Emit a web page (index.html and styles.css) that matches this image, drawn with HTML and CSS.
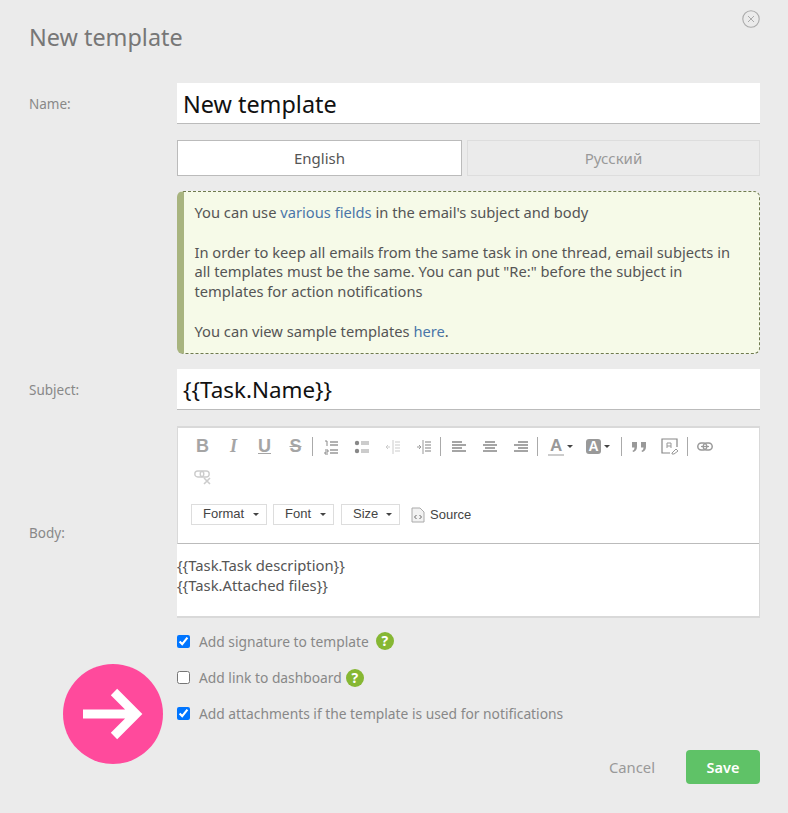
FILE: index.html
```html
<!DOCTYPE html>
<html lang="en">
<head>
<meta charset="utf-8">
<title>New template</title>
<link rel="stylesheet" href="styles.css">
</head>
<body>
<main class="dialog">
  <button class="close" aria-label="Close"><svg viewBox="0 0 18 18" width="18" height="18"><circle cx="9" cy="9" r="8.2" fill="none" stroke="#aaa" stroke-width="1.1"/><path d="M6 6l6 6M12 6l-6 6" stroke="#aaa" stroke-width="1" fill="none"/></svg></button>
  <h1 class="title">New template</h1>

  <div class="row row-name">
    <label class="label">Name:</label>
    <div class="big-input">New template</div>
  </div>

  <div class="tabs">
    <div class="tab tab-active">English</div>
    <div class="tab">Русский</div>
  </div>

  <div class="notice">
    <p>You can use <a href="#">various fields</a> in the email's subject and body</p>
    <p>In order to keep all emails from the same task in one thread, email subjects in all templates must be the same. You can put "Re:" before the subject in templates for action notifications</p>
    <p>You can view sample templates <a href="#">here</a>.</p>
  </div>

  <div class="row row-subject">
    <label class="label">Subject:</label>
    <div class="big-input big-subject">{{Task.Name}}</div>
  </div>

  <div class="row row-body">
    <label class="label label-body">Body:</label>
    <div class="editor">
      <div class="toolbar">
        <div class="tools">
          <span class="tool glyph g-b">B</span>
          <span class="tool glyph g-i">I</span>
          <span class="tool glyph g-u">U</span>
          <span class="tool glyph g-s">S</span>
          <span class="sep"></span>
          <span class="tool"><svg viewBox="0 0 16 16" width="16" height="16"><path d="M2 2h2v5M2 11h3v2H2v2h3" fill="none" stroke="#888" stroke-width="1"/><path d="M7 3h8M7 6h8M7 11h8M7 14h8" stroke="#999" stroke-width="1.6"/></svg></span>
          <span class="tool"><svg viewBox="0 0 16 16" width="16" height="16"><circle cx="3" cy="4" r="2.2" fill="#888"/><circle cx="3" cy="12" r="2.2" fill="#888"/><path d="M7 3h8M7 5h8M7 11h8M7 13h8" stroke="#999" stroke-width="1.2"/></svg></span>
          <span class="tool"><svg viewBox="0 0 16 16" width="16" height="16"><path d="M8 1v14" stroke="#ccc" stroke-width="1"/><path d="M1 8h4M3 6l-2 2 2 2" stroke="#ccc" fill="none"/><path d="M10 3h5M10 6h5M10 9h5M10 12h5" stroke="#ddd" stroke-width="1.4"/></svg></span>
          <span class="tool"><svg viewBox="0 0 16 16" width="16" height="16"><path d="M7 1v14" stroke="#999" stroke-width="1"/><path d="M1 8h4M3 6l2 2-2 2" stroke="#999" fill="none"/><path d="M9 3h6M9 6h6M9 9h6M9 12h6" stroke="#aaa" stroke-width="1.4"/></svg></span>
          <span class="sep"></span>
          <span class="tool"><svg viewBox="0 0 16 14" width="16" height="14"><path d="M1 2h10M1 5h14M1 8h10M1 11h14" stroke="#888" stroke-width="1.7"/></svg></span>
          <span class="tool"><svg viewBox="0 0 16 14" width="16" height="14"><path d="M3 2h10M1 5h14M3 8h10M1 11h14" stroke="#888" stroke-width="1.7"/></svg></span>
          <span class="tool"><svg viewBox="0 0 16 14" width="16" height="14"><path d="M5 2h10M1 5h14M5 8h10M1 11h14" stroke="#888" stroke-width="1.7"/></svg></span>
          <span class="sep"></span>
          <span class="tool tool-wide"><span class="glyph-a">A</span><i class="caret"></i></span>
          <span class="tool tool-wide tool-wider"><span class="glyph-a2">A</span><i class="caret"></i></span>
          <span class="sep"></span>
          <span class="tool"><svg viewBox="0 0 16 12" width="16" height="12"><path d="M1 1h5v5c0 3-2 4.500-4 5l-.500-1.200C3 9 3.500 8 3.500 6.500H1zM10 1h5v5c0 3-2 4.500-4 5l-.500-1.200C12 9 12.500 8 12.500 6.500H10z" fill="#999"/></svg></span>
          <span class="tool"><svg viewBox="0 0 18 18" width="18" height="18"><path d="M9 15H1V1h15v8" fill="none" stroke="#888" stroke-width="1.200"/><path d="M6 10V5h4v5M6 8h4" fill="none" stroke="#999"/><path d="M11 15l4-4 2 2-4 3h-2z" fill="#fff" stroke="#999"/></svg></span>
          <span class="sep"></span>
          <span class="tool"><svg viewBox="0 0 16 10" width="16" height="10"><rect x=".8" y="1" width="9" height="7" rx="3.500" fill="none" stroke="#999" stroke-width="1.500"/><rect x="6.200" y="1" width="9" height="7" rx="3.500" fill="none" stroke="#999" stroke-width="1.500"/><path d="M4 4.500h8" stroke="#999" stroke-width="1.200"/></svg></span>
          <span class="tool"><svg viewBox="0 0 18 16" width="18" height="16"><rect x=".8" y="1" width="9" height="6" rx="3" fill="none" stroke="#ccc" stroke-width="1.400"/><rect x="6.200" y="1" width="9" height="6" rx="3" fill="none" stroke="#ccc" stroke-width="1.400"/><path d="M10 8l6 6M16 8l-6 6" stroke="#ccc" stroke-width="1.600"/></svg></span>
        </div>
        <div class="combos">
          <span class="combo c-format"><span class="combo-text">Format</span><i class="caret"></i></span>
          <span class="combo c-font"><span class="combo-text">Font</span><i class="caret"></i></span>
          <span class="combo c-size"><span class="combo-text">Size</span><i class="caret"></i></span>
          <span class="source"><svg viewBox="0 0 14 16" width="14" height="16"><path d="M1 1h8l4 4v10H1z" fill="#f2f2f2" stroke="#aaa"/><path d="M5.500 8l-2 2 2 2M8.500 8l2 2-2 2" fill="none" stroke="#666"/></svg>Source</span>
        </div>
      </div>
      <div class="body-text">
        <div>{{Task.Task description}}</div>
        <div>{{Task.Attached files}}</div>
      </div>
    </div>
  </div>

  <div class="options">
    <label class="option"><input type="checkbox" checked><span>Add signature to template</span><b class="help help-sig">?</b></label>
    <label class="option"><input type="checkbox"><span>Add link to dashboard</span><b class="help">?</b></label>
    <label class="option"><input type="checkbox" checked><span>Add attachments if the template is used for notifications</span></label>
  </div>

  <div class="actions">
    <button class="cancel">Cancel</button>
    <button class="save">Save</button>
  </div>

  <div class="badge"><svg viewBox="0 0 100 100" width="100" height="100"><path d="M20 50h52M51 28l22 22-22 22" fill="none" stroke="#fff" stroke-width="9"/></svg></div>
</main>
</body>
</html>
```
FILE: styles.css
```css
* { box-sizing: border-box; }
html, body { margin: 0; padding: 0; }
body {
  background: #ebebeb;
  font-family: "Noto Sans", sans-serif;
  color: #555;
  width: 788px;
  height: 813px;
  overflow: hidden;
}
.dialog { position: relative; padding: 23px 28px 0 29px; height: 813px; }
.close {
  position: absolute; top: 10px; right: 28px;
  width: 18px; height: 18px; padding: 0; border: 0; background: none; line-height: 0;
}
.title { margin: 0 0 31px; font-size: 23.4px; line-height: 29px; font-weight: 400; color: #777; }
.row { display: grid; grid-template-columns: 148px 583px; align-items: center; }
.label { font-size: 13.5px; color: #888; }
.big-input {
  height: 41px; background: #fff; border-bottom: 1px solid #bbb;
  padding: 0 6px; font-size: 23.4px; line-height: 42px; color: #111;
}
.big-subject { font-size: 22.4px; }
.tabs { display: grid; grid-template-columns: 285px 293px; gap: 5px; margin: 16px 0 15px 148px; }
.tab {
  height: 36px; border: 1px solid #ddd; color: #999; text-align: center;
  font-size: 15px; line-height: 34px;
}
.tab-active { background: #fff; border-color: #bbb; color: #555; }
.notice {
  margin: 0 0 15px 148px; height: 163px; padding: 11px 22px 0 10.5px;
  background: #f6fae8; border: 1px dashed #6f7a4f; border-left: 7px solid #a8b47f; border-radius: 6px;
  font-size: 14.7px; line-height: 19.8px; color: #555;
}
.notice p { margin: 0 0 19.8px; }
.notice a { color: #4a76a8; text-decoration: none; }
.row-body { margin-top: 16px; }
.label-body { padding-top: 22px; }
.editor { border: 1px solid #d9d9d9; border-width: 2px 1px 2px 0; background: #fff; height: 192px; }
.toolbar { height: 116px; padding: 3px 30px 0 9px; border-bottom: 1px solid #bbb; border-left: 1px solid #d9d9d9; }
.tools { display: flex; flex-wrap: wrap; align-items: center; height: 62px; align-content: flex-start; }
.tool { width: 31px; height: 31px; display: flex; align-items: center; justify-content: center; }
.tool-wide { width: 38px; gap: 3px; justify-content: flex-start; padding-left: 8px; }
.tool-wider { width: 41.5px; }
.glyph { font-family: "Liberation Sans", sans-serif; font-size: 18px; font-weight: 700; color: #a5a5a5; }
.g-i { font-family: "Liberation Serif", serif; font-style: italic; }
.g-u { text-decoration: underline; }
.g-s { text-decoration: line-through; }
.sep { width: 1px; height: 19px; background: #aaa; margin: 0 2px 0 1px; }
.glyph-a { font: 700 17px "Liberation Sans", sans-serif; color: #999; border-bottom: 2px solid #ccc; line-height: 17px; padding: 0 2px; }
.glyph-a2 { font: 700 14px "Liberation Sans", sans-serif; color: #fff; background: #999; border-radius: 3px; width: 15px; height: 15px; line-height: 15px; text-align: center; }
.caret { display: inline-block; width: 0; height: 0; border: 3px solid transparent; border-top-color: #444; border-bottom: 0; }
.combos { display: flex; align-items: center; margin: 11px 0 0 4px; width: 320px; }
.combo {
  display: flex; align-items: center; justify-content: space-between; height: 21px;
  padding: 0 7px 0 11px; border: 1px solid #ddd;
  font: 13px "Liberation Sans", sans-serif; color: #444; margin-right: 6px;
}
.combo-text { margin-top: -2px; }
.c-format { width: 76px; }
.c-font { width: 61px; margin-right: 7px; }
.c-size { width: 59px; }
.source { display: flex; align-items: center; gap: 5px; margin-left: 5px; font: 13px "Liberation Sans", sans-serif; color: #444; }
.body-text { padding: 11px 0 0; font-size: 14.8px; line-height: 20px; color: #555; }
.options { margin: 5px 0 0 148px; }
.option { display: flex; align-items: center; height: 36.4px; font-size: 13.8px; color: #888; }
.option input { width: 13px; height: 13px; margin: 0 9px 0 0; }
.help {
  width: 18px; height: 18px; border-radius: 50%; background: #86b733; color: #fff;
  font-size: 14px; line-height: 18px; text-align: center; margin-left: 4px;
}
.help-sig { margin-left: 7px; }
.actions { display: flex; justify-content: flex-end; align-items: center; margin-top: 18px; }
.cancel { border: 0; background: none; font: 14.8px "Noto Sans", sans-serif; color: #999; margin-right: 31px; padding: 0; }
.save { width: 74px; height: 34px; border: 0; border-radius: 4px; background: #5fc267; color: #fff; font: 600 14.5px "Noto Sans", sans-serif; }
.badge { position: absolute; left: 63px; top: 664px; width: 100px; height: 100px; border-radius: 50%; background: #ff4a9c; line-height: 0; }
```
